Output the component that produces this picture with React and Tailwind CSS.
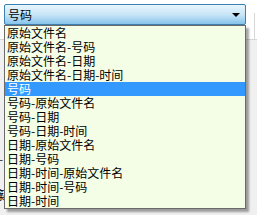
import React from 'react';

const items = [
  '原始文件名',
  '原始文件名-号码',
  '原始文件名-日期',
  '原始文件名-日期-时间',
  '号码',
  '号码-原始文件名',
  '号码-日期',
  '号码-日期-时间',
  '日期-原始文件名',
  '日期-号码',
  '日期-时间-原始文件名',
  '日期-时间-号码',
  '日期-时间',
];

const font = { fontFamily: '"Noto Sans CJK SC", "Liberation Sans", sans-serif' };

function ComboBox({ value, selected }) {
  return (
    <div className="relative z-10 w-[243px] self-start">
      <div className="flex h-[21px] items-center rounded-[2px] border border-[#3c7fb1] bg-gradient-to-b from-[#e8f5fd] via-[#c8e6f7] to-[#86c3ea] pl-[3px] pr-[5px]">
        <span className="flex-1 leading-[14px]">{value}</span>
        <svg width="8" height="4" viewBox="0 0 8 4" className="mt-[1px]">
          <path d="M0 0h8L4 4z" fill="#000" />
        </svg>
      </div>
      {/* open dropdown list */}
      <div className="absolute left-0 top-full w-full border border-[#6a6a6a] bg-[#f4fee6] shadow-[3px_3px_2px_rgba(0,0,0,0.35)]">
        {items.map((label, i) => (
          <div
            key={label}
            className={
              i === selected
                ? 'h-[14px] bg-[#3399ff] pl-[2px] leading-[14px] text-white'
                : 'h-[14px] pl-[2px] leading-[14px]'
            }
          >
            {label}
          </div>
        ))}
      </div>
    </div>
  );
}

export default function App() {
  return (
    <div className="flex h-[215px] w-[257px] flex-col overflow-hidden bg-[#f0f0f0] text-[12px] text-black" style={font}>
      <div className="flex h-[40px] shrink-0 gap-[8px] border-b border-[#d6d6d6] bg-white pl-[4px] pt-[4px]">
        <ComboBox value="号码" selected={4} />
        <div className="mt-[9px] w-[3px] border-l border-[#d8d8d8]" />
      </div>
      {/* form labels peeking out behind the list */}
      <div className="flex flex-col">
        <span className="mt-[112px] ml-[-1px] leading-[14px] text-[#333]">-</span>
        <span className="mt-[22px] ml-[-7px] leading-[14px]">篠</span>
      </div>
    </div>
  );
}
